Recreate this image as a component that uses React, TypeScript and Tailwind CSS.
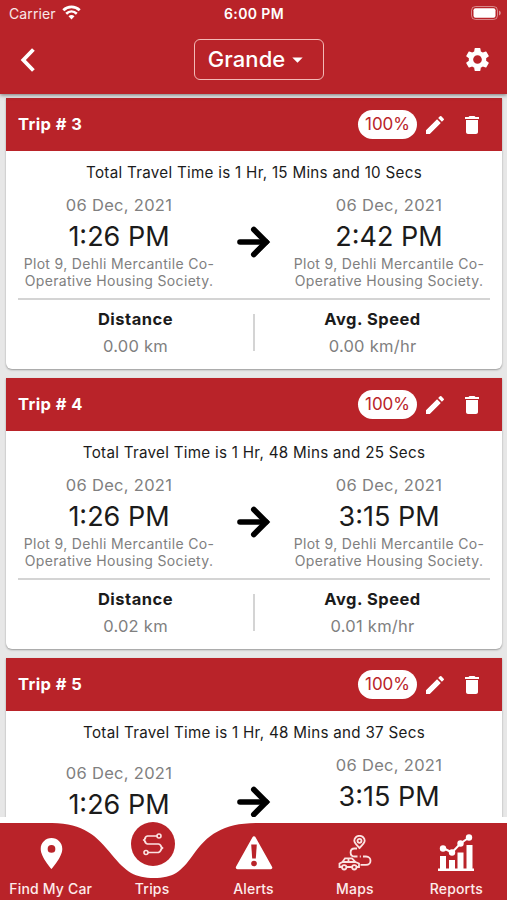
import type { ReactNode } from "react";
import { MdArrowDropDown, MdDelete, MdEdit, MdLocationOn, MdSettings } from "react-icons/md";

type Stop = { date: string; time: string; address?: string };
type Trip = { id: number; duration: string; from: Stop; to: Stop; distance?: string; speed?: string };

const DATE = "06 Dec, 2021";
const ADDRESS = "Plot 9, Dehli Mercantile Co-\nOperative Housing Society.";

const trips: Trip[] = [
  {
    id: 3,
    duration: "1 Hr, 15 Mins and 10 Secs",
    from: { date: DATE, time: "1:26 PM", address: ADDRESS },
    to: { date: DATE, time: "2:42 PM", address: ADDRESS },
    distance: "0.00 km",
    speed: "0.00 km/hr",
  },
  {
    id: 4,
    duration: "1 Hr, 48 Mins and 25 Secs",
    from: { date: DATE, time: "1:26 PM", address: ADDRESS },
    to: { date: DATE, time: "3:15 PM", address: ADDRESS },
    distance: "0.02 km",
    speed: "0.01 km/hr",
  },
  {
    id: 5,
    duration: "1 Hr, 48 Mins and 37 Secs",
    from: { date: DATE, time: "1:26 PM" },
    to: { date: DATE, time: "3:15 PM" },
  },
];

function StatusBar() {
  return (
    <div className="grid h-[27px] grid-cols-3 items-center pr-[6px] pl-[9px] text-[14px] leading-none">
      <div className="flex items-center gap-[6px] text-white/90">
        <span className="tracking-[0.1px]">Carrier</span>
        <svg className="-mt-[2px]" width="19" height="15" viewBox="0 0 19 15" fill="none" stroke="white">
          <path d="M1.300 5.200C6 .7 13 .7 17.700 5.200" strokeWidth="2.800" />
          <path d="M4.200 8.700C7.300 5.800 11.700 5.800 14.800 8.700" strokeWidth="2.600" />
          <path d="M9.500 14.500 6.500 11.300Q9.500 8.700 12.500 11.300Z" fill="white" stroke="none" />
        </svg>
      </div>
      <span className="-ml-[2px] text-center font-semibold tracking-[0.4px] whitespace-nowrap">6:00 PM</span>
      <svg className="-mt-[1px] justify-self-end" width="30" height="14" viewBox="0 0 30 14">
        <rect x=".5" y=".5" width="26" height="13" rx="4" fill="none" stroke="white" strokeOpacity=".45" />
        <rect x="2.500" y="2.200" width="22" height="9.600" rx="2" fill="white" />
        <path d="M28 4.500v5q1.800-.8 1.800-2.500T28 4.500" fill="white" fillOpacity=".5" />
      </svg>
    </div>
  );
}

function Header() {
  return (
    <header className="relative z-10 h-[94px] shrink-0 bg-[#b92329] text-white shadow-[0_1px_4px_rgba(0,0,0,0.5)]">
      <StatusBar />
      <div className="flex h-[65px] items-center justify-between pr-[15px] pl-[20px]">
        <button type="button" aria-label="Back" className="w-[34px]">
          <svg width="16" height="26" viewBox="0 0 16 26" fill="none" stroke="white" strokeWidth="3.800">
            <path d="M13.400 2.500 3.300 13l10.100 10.500" />
          </svg>
        </button>
        <button
          type="button"
          className="flex h-[41px] w-[130px] items-center justify-center rounded-[6px] border-[1.500px] border-[#f3b9b6] pl-[1px]"
        >
          <span className="text-[22px] font-medium tracking-[0.1px]">Grande</span>
          <MdArrowDropDown className="size-[25px]" />
        </button>
        <button type="button" aria-label="Settings">
          <MdSettings className="size-[29px]" />
        </button>
      </div>
    </header>
  );
}

function StopInfo({ stop }: { stop: Stop }) {
  return (
    <div className="flex w-[202px] flex-col items-center">
      <div className="h-[26px] text-[16.500px] leading-[26px] tracking-[0.3px] text-[#808080]">{stop.date}</div>
      <div className="h-[37px] text-[27px] leading-[37px] text-[#1b1b1b]">{stop.time}</div>
      {stop.address && (
        <div className="text-center text-[14px] leading-[17px] tracking-[0.33px] whitespace-pre text-[#808080]">
          {stop.address}
        </div>
      )}
    </div>
  );
}

function Stat({ label, value }: { label: string; value?: string }) {
  return (
    <div className="flex-1 text-center">
      <div className="text-[16.500px] leading-[27px] font-bold tracking-[0.5px] text-[#1b1b1b]">{label}</div>
      <div className="text-[16.500px] leading-[27px] tracking-[0.25px] text-[#808080]">{value}</div>
    </div>
  );
}

function TripCard({ trip }: { trip: Trip }) {
  // trips with no address yet keep the two stops slightly staggered
  const pending = !trip.to.address;
  return (
    <article className="h-[271px] shrink-0 overflow-hidden rounded-b-[6px] bg-white shadow-[0_1px_2px_rgba(0,0,0,0.35)]">
      <div className="flex h-[53px] items-center bg-[#b92329] pr-[18px] pl-[12px] text-white">
        <h2 className="flex-1 text-[16.500px] font-bold tracking-[0.4px]">Trip # {trip.id}</h2>
        <span className="flex h-[29px] w-[59px] items-center justify-center rounded-full bg-white text-[17px] text-[#b92329]">
          100%
        </span>
        <MdEdit className="ml-[6px] size-[24px]" />
        <MdDelete className="ml-[13px] size-[24px]" />
      </div>
      <div className="px-3">
        <p className="pt-[9px] text-center text-[15.200px] leading-[26px] tracking-[0.28px] text-[#1b1b1b]">
          Total Travel Time is {trip.duration}
        </p>
        <div className="flex h-[114px] items-start justify-between border-b-2 border-[#d4d4d4] pt-[6px]">
          <div className={pending ? "pt-[8px]" : undefined}>
            <StopInfo stop={trip.from} />
          </div>
          <svg
            className="mt-[33px]"
            width="34"
            height="34"
            viewBox="0 0 34 34"
            fill="none"
            stroke="black"
            strokeWidth="5.600"
            strokeLinecap="round"
          >
            <path d="M3 17h26" />
            <path d="m16.800 4.500 12.500 12.500-12.500 12.500" />
          </svg>
          <StopInfo stop={trip.to} />
        </div>
        {!pending && (
          <div className="flex pt-[6px]">
            <Stat label="Distance" value={trip.distance} />
            <div className="mt-[8px] h-[37px] w-[2px] bg-[#d4d4d4]" />
            <Stat label="Avg. Speed" value={trip.speed} />
          </div>
        )}
      </div>
    </article>
  );
}

function TripsIcon() {
  return (
    <svg width="24" height="24" viewBox="0 0 24 24" fill="none" stroke="#fbe3e2" strokeWidth="1.600">
      <path d="M16 4H6.500Q3.800 4.500 3.500 8q.3 3.500 3 4h11q2.700.5 3 4-.3 3.500-3 4.500H7" />
      <path d="M5 6 2.500 8 5 10.200M19.500 13.800l2.300 2.200-2.300 2.200" strokeWidth="1.200" />
      <circle cx="18" cy="4" r="2" />
      <circle cx="5" cy="20.500" r="2" />
    </svg>
  );
}

function AlertIcon() {
  return (
    <svg width="38" height="36" viewBox="0 0 38 36">
      <path d="M19 3 35.500 32.500h-33z" fill="white" stroke="white" strokeWidth="3.500" strokeLinejoin="round" />
      <path d="M16.200 9.500h5.600l-1 14h-3.600z" fill="#b92329" />
      <circle cx="19" cy="28.500" r="2.800" fill="#b92329" />
    </svg>
  );
}

function MapsIcon() {
  return (
    <svg width="34" height="36" viewBox="0 0 34 36" fill="none" stroke="#fbe3e2" strokeWidth="1.800">
      <path d="M21.500 13C17.500 9 16.300 7.500 16.300 5.800a5.200 5 0 0 1 10.400 0c0 1.700-1.200 3.200-5.200 7.200Z" />
      <circle cx="21.500" cy="5.800" r="2" />
      <path d="M19 13.500h-2.500c-5.200 0-5.200 8 0 8h3M21.800 21.500h1M25 21.500h3c6 0 6 8.300 0 8.300h-5.500" />
      <path d="M4 32H1.500v-3.500l3-1.500 2.500-3.700h7l3.500 3.700 3.500 1.500V32h-2.500M8.500 32h5.500M4.500 27h13M10.500 23.500V27" />
      <circle cx="6.200" cy="32.300" r="2.200" />
      <circle cx="16.300" cy="32.300" r="2.200" />
    </svg>
  );
}

function ReportsIcon() {
  return (
    <svg width="36" height="37" viewBox="0 0 36 37" fill="white">
      <path d="M0 34.500h36V37H0zM2 22h6v13H2zM11 26h6v9h-6zM19.500 18.500h6V35h-6zM28.500 11h6v24h-6z" />
      <path d="m5 14 9 4.500 8.500-9L31 3.500" fill="none" stroke="white" strokeWidth="2" />
      <circle cx="5" cy="14.500" r="3.200" />
      <circle cx="14" cy="18.500" r="3.200" />
      <circle cx="22.500" cy="9.500" r="3.200" />
      <circle cx="31" cy="3.500" r="3.200" />
    </svg>
  );
}

function NavItem({ label, active, children }: { label: string; active?: boolean; children: ReactNode }) {
  return (
    <a className="flex flex-1 flex-col items-center">
      <div className="flex h-[57px] items-end justify-center pb-[9px]">
        {active ? (
          <div className="mb-[5px] ml-[1px] flex size-[44px] items-center justify-center rounded-full bg-[#b92329]">
            {children}
          </div>
        ) : (
          children
        )}
      </div>
      <span className="text-[14px] leading-[18px] font-medium tracking-[0.18px] whitespace-nowrap text-[#fdeceb]">{label}</span>
    </a>
  );
}

function BottomNav() {
  return (
    <nav className="relative z-10 h-[83px] shrink-0 bg-white pt-[6px]">
      <svg className="absolute inset-x-0 bottom-0" width="507" height="77" viewBox="0 0 507 77" fill="#b92329">
        <path d="M0 0H52C84 1 96 12 112 32C126 49 135 55 154 55C173 55 181 49 193 32C207 12 223 0 257 0H507V77H0Z" />
      </svg>
      <div className="relative flex">
        <NavItem label="Find My Car">
          <MdLocationOn className="-mb-[1px] ml-[1px] size-[37px] text-white" />
        </NavItem>
        <NavItem label="Trips" active>
          <TripsIcon />
        </NavItem>
        <NavItem label="Alerts">
          <AlertIcon />
        </NavItem>
        <NavItem label="Maps">
          <MapsIcon />
        </NavItem>
        <NavItem label="Reports">
          <ReportsIcon />
        </NavItem>
      </div>
    </nav>
  );
}

export default function App() {
  return (
    <div className="flex h-screen w-full flex-col overflow-hidden bg-[#e7e7e7] font-['Inter','Liberation_Sans',sans-serif]">
      <Header />
      <main className="flex min-h-0 flex-1 flex-col gap-[9px] overflow-hidden pt-[4px] pr-[5px] pl-[6px]">
        {trips.map((t) => (
          <TripCard key={t.id} trip={t} />
        ))}
      </main>
      <BottomNav />
    </div>
  );
}
